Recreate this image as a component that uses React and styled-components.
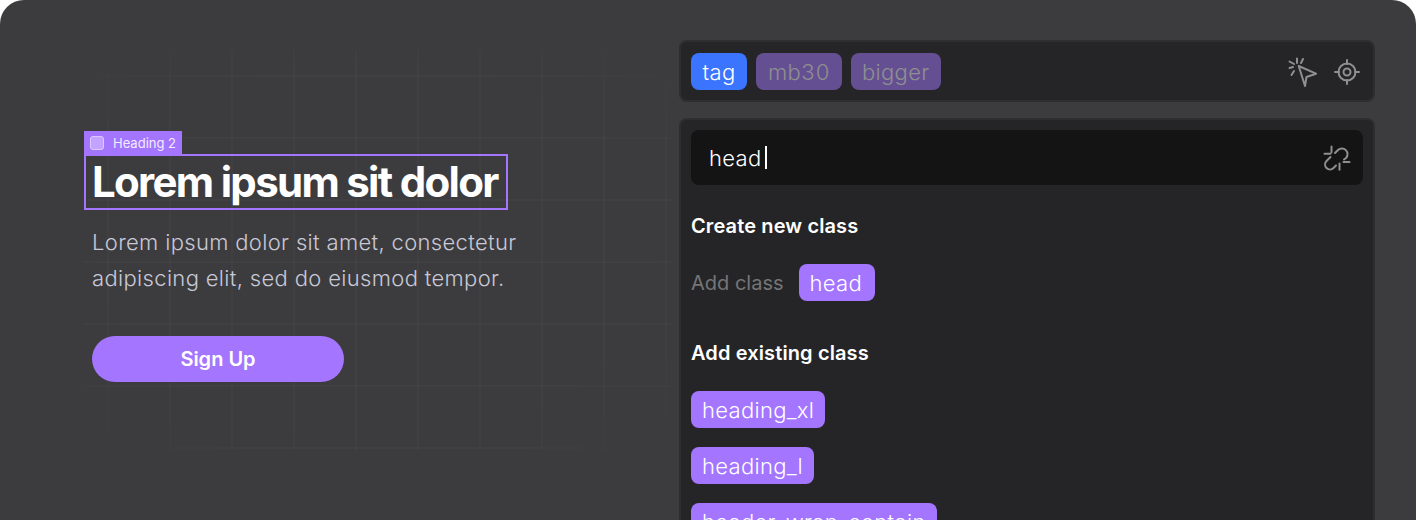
import React from "react";
import styled, { createGlobalStyle } from "styled-components";

const GlobalStyle = createGlobalStyle`
  html, body {
    margin: 0;
    height: 520px;
    overflow: hidden;
    background: #ffffff;
    font-family: "Inter", "Liberation Sans", sans-serif;
  }
`;

const purple = "#a475ff";

const Frame = styled.div`
  width: 1416px;
  height: 520px;
  overflow: hidden;
  box-sizing: border-box;
  display: flex;
  background: #3c3c3e;
  border-radius: 24px 24px 0 0;
  padding: 40px 41px 0 84px;
`;

const Preview = styled.section`
  position: relative;
  width: 595px;
  flex: none;
  padding-top: 91px;
  box-sizing: border-box;

  /* faint grid behind the canvas */
  &::before {
    content: "";
    position: absolute;
    left: 0;
    top: 10px;
    width: 588px;
    height: 400px;
    background-image:
      linear-gradient(to right, rgba(255, 255, 255, 0.022) 2px, transparent 2px),
      linear-gradient(to bottom, rgba(255, 255, 255, 0.022) 2px, transparent 2px);
    background-size: 62px 62px;
    background-position: 23px 25px;
    -webkit-mask-image: radial-gradient(ellipse at center, #000 65%, transparent 100%);
    mask-image: radial-gradient(ellipse at center, #000 65%, transparent 100%);
  }
`;

const Content = styled.div`
  position: relative;
  display: flex;
  flex-direction: column;
  align-items: flex-start;
`;

const SelectedLabel = styled.div`
  display: flex;
  align-items: center;
  gap: 9px;
  height: 24px;
  margin-bottom: -1px;
  padding: 0 6px;
  background: ${purple};
  color: #f3ecff;
  font-size: 13px;
`;

const LabelCheck = styled.span`
  width: 12px;
  height: 12px;
  border-radius: 3px;
  background: #c3a3ff;
  border: 1px solid #dccaff;
`;

const Heading = styled.h2`
  margin: 0;
  box-sizing: border-box;
  height: 56px;
  padding: 0 8px 0 6px;
  border: 2px solid ${purple};
  color: #ffffff;
  font-family: "Inter", sans-serif;
  font-size: 42px;
  font-weight: 650;
  letter-spacing: -1.7px;
  line-height: 52px;
  white-space: nowrap;
`;

const Lead = styled.p`
  margin: 14px 0 0 8px;
  color: #c8c8d6;
  font-size: 22px;
  font-weight: 300;
  letter-spacing: 0.34px;
  line-height: 36px;
  white-space: nowrap;
`;

const SignUp = styled.button`
  margin: 40px 0 0 8px;
  width: 252px;
  height: 46px;
  border: 0;
  border-radius: 23px;
  background: ${purple};
  color: #ffffff;
  font-family: inherit;
  font-size: 20px;
  font-weight: 600;
`;

const Side = styled.section`
  flex: 1;
  display: flex;
  flex-direction: column;
  gap: 16px;
`;

const Card = styled.div`
  box-sizing: border-box;
  background: #252527;
  border: 2px solid #2e2e30;
  border-radius: 8px;
  padding: 10px;
`;

const TagBar = styled(Card)`
  height: 62px;
  padding-top: 11px;
  display: flex;
  align-items: center;
  gap: 9px;
`;

const tagColors = { blue: "#3a74ff", dim: "#644f92" };

const Tag = styled.span`
  display: inline-flex;
  align-items: center;
  box-sizing: border-box;
  height: 37px;
  padding: 0 ${(p) => p.$end ?? (p.$kind ? 11.5 : 11)}px 0 ${(p) => (p.$kind ? 11.5 : 11)}px;
  border-radius: 8px;
  font-size: 22px;
  font-weight: 350;
  letter-spacing: 0.3px;
  font-variant-numeric: tabular-nums;
  background: ${(p) => tagColors[p.$kind] || purple};
  color: ${(p) => (p.$kind === "dim" ? "#8f8f8f" : "#ffffff")};
`;

const Tools = styled.div`
  margin-left: auto;
  display: flex;
  align-items: center;
  gap: 16px;
  padding-right: 3px;
  color: #8f8f8f;
`;

const ClassCard = styled(Card)`
  flex: 1;
  border-bottom: 0;
  border-radius: 8px 8px 0 0;
`;

const Search = styled.div`
  height: 55px;
  display: flex;
  align-items: center;
  padding: 0 12px 0 18px;
  border-radius: 8px;
  background: #141414;
  color: #ffffff;
  font-size: 22px;
  font-weight: 350;
  letter-spacing: 0.3px;
`;

const Caret = styled.span`
  width: 2px;
  height: 23px;
  margin-left: 4px;
  background: #ffffff;
`;

const SearchIcon = styled.span`
  margin-left: auto;
  display: flex;
  color: #8f8f8f;
`;

const GroupTitle = styled.h3`
  margin: ${(p) => p.$top}px 0 0;
  color: #ffffff;
  font-size: 20px;
  font-weight: 600;
  letter-spacing: 0.12px;
  line-height: 24px;
`;

const AddRow = styled.div`
  margin-top: 26px;
  display: flex;
  align-items: center;
  gap: 15px;
`;

const Muted = styled.span`
  color: #757577;
  font-size: 20px;
`;

const ClassList = styled.div`
  margin-top: 26px;
  display: flex;
  flex-direction: column;
  align-items: flex-start;
  gap: 19px;
`;

const CursorIcon = () => (
  <svg width="30" height="30" viewBox="0 0 30 30" fill="none" stroke="currentColor" strokeWidth="2" strokeLinecap="round" strokeLinejoin="round">
    <path d="M10.7 9L28 16.7 18.5 20 17 29z" />
    <path d="M9 1.5V6M15 2l-2 4M1.5 4.5L6 7M1.5 11L5 10M3.5 18L6 14" />
  </svg>
);

const TargetIcon = () => (
  <svg width="26" height="26" viewBox="0 0 26 26" fill="none" stroke="currentColor" strokeWidth="2" strokeLinecap="round">
    <circle cx="13" cy="13" r="8.5" />
    <circle cx="13" cy="13" r="3.5" />
    <path d="M13 1v4M13 21v4M1 13h4M21 13h4" />
  </svg>
);

const UnlinkIcon = () => (
  <svg width="28" height="28" viewBox="4.500 3.500 28 28" fill="none" stroke="currentColor" strokeWidth="2" strokeLinecap="round">
    <path d="M16.500 12.500L19.500 9.500A5.660 5.660 0 0 1 27.500 17.500L25.500 19" />
    <path d="M12 16.500L8 20.500A4.950 4.950 0 0 0 15 27.500L17.500 25" />
    <path d="M6 13.300h6M13 6v5.700M25 21.500h6M21 23v6.300" />
  </svg>
);

export default function App() {
  return (
    <>
      <GlobalStyle />
      <Frame>
        <Preview>
          <Content>
            <SelectedLabel>
              <LabelCheck />
              Heading 2
            </SelectedLabel>
            <Heading>Lorem ipsum sit dolor</Heading>
            <Lead>
              Lorem ipsum dolor sit amet, consectetur
              <br />
              adipiscing elit, sed do eiusmod tempor.
            </Lead>
            <SignUp>Sign Up</SignUp>
          </Content>
        </Preview>
        <Side>
          <TagBar>
            <Tag $kind="blue" $end={12}>tag</Tag>
            <Tag $kind="dim">mb30</Tag>
            <Tag $kind="dim">bigger</Tag>
            <Tools>
              <CursorIcon />
              <TargetIcon />
            </Tools>
          </TagBar>
          <ClassCard>
            <Search>
              head
              <Caret />
              <SearchIcon>
                <UnlinkIcon />
              </SearchIcon>
            </Search>
            <GroupTitle $top={29}>Create new class</GroupTitle>
            <AddRow>
              <Muted>Add class</Muted>
              <Tag $end={13}>head</Tag>
            </AddRow>
            <GroupTitle $top={40}>Add existing class</GroupTitle>
            <ClassList>
              <Tag>heading_xl</Tag>
              <Tag>heading_l</Tag>
              <Tag>header_wrap_contain</Tag>
            </ClassList>
          </ClassCard>
        </Side>
      </Frame>
    </>
  );
}
